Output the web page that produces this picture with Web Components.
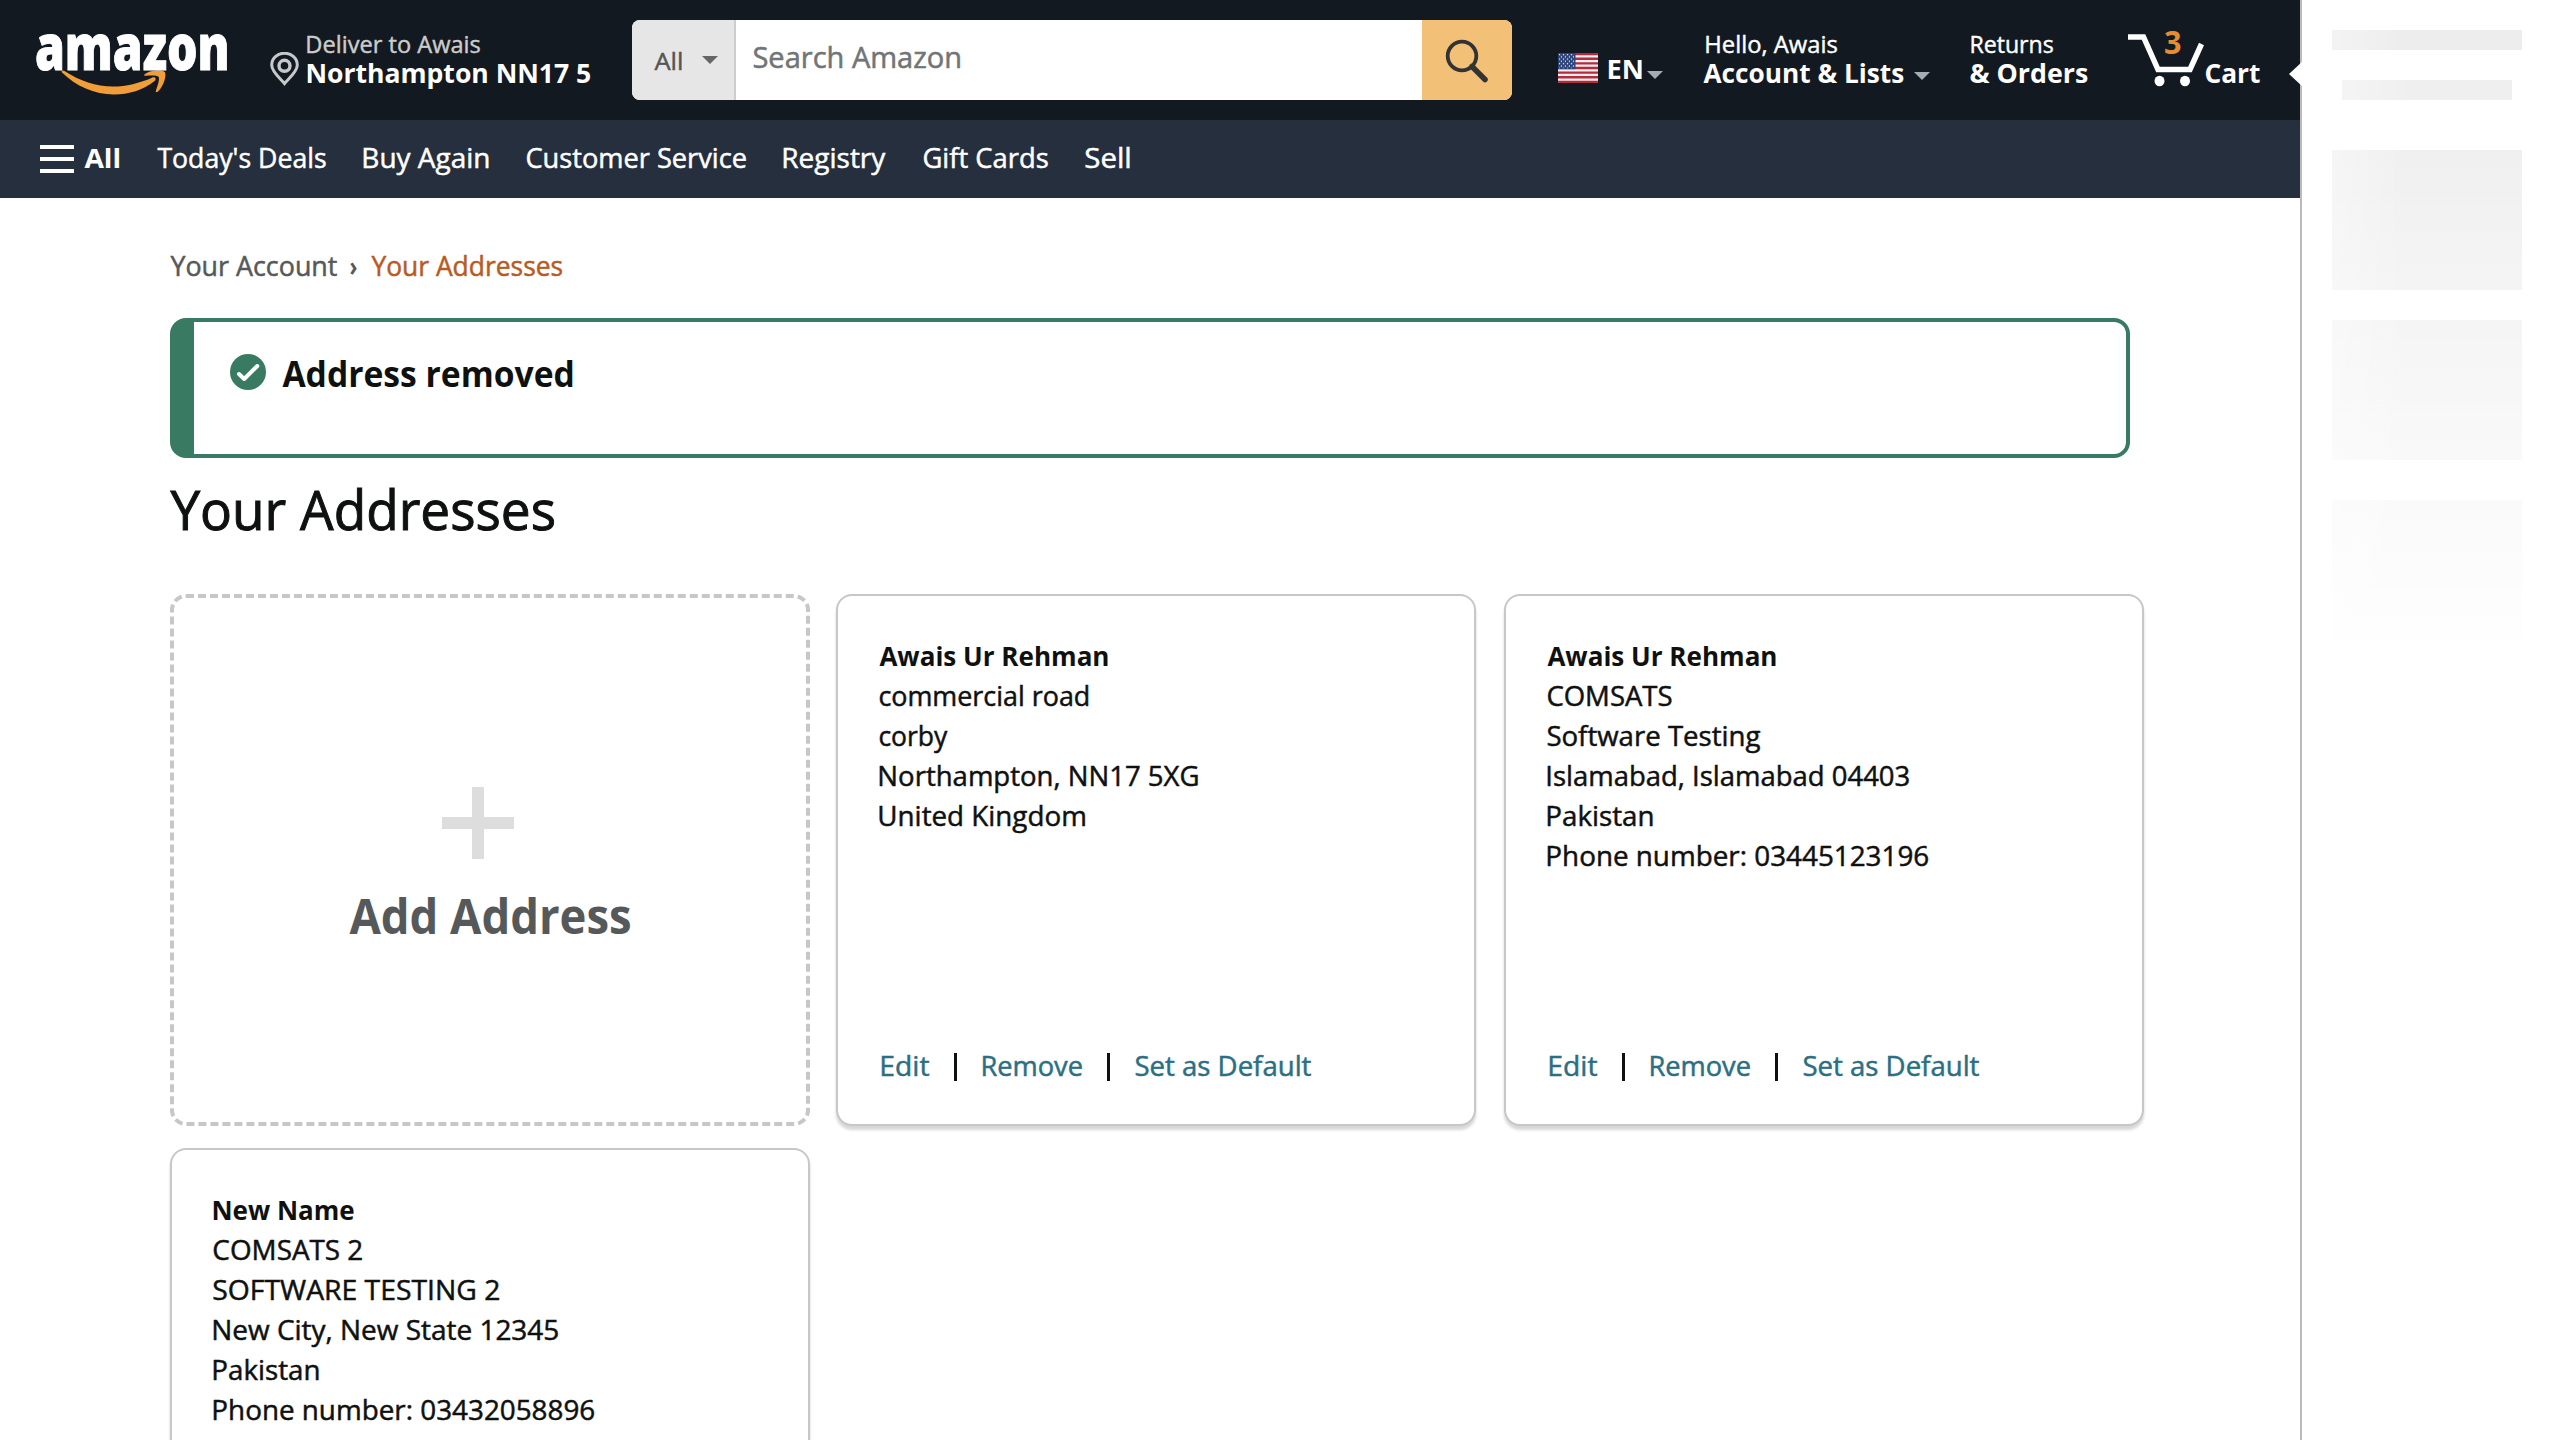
<!DOCTYPE html>
<html lang="en">
<head>
<meta charset="utf-8">
<title>Your Addresses</title>
<style>
html,body{margin:0;padding:0;background:#fff}
body{font-family:"Open Sans","Noto Sans",sans-serif;color:#0f1111;width:2560px;height:1440px;overflow:hidden}
</style>
</head>
<body>
<address-page></address-page>
<script>
const canvas = document.createElement('canvas').getContext('2d');
const define = (name, html) => customElements.define(name, class extends HTMLElement {
  constructor(){ super(); this.attachShadow({mode:'open'}).innerHTML = html; }
});

/* One line of text whose ink spans exactly `w` px; the box runs from cap height to baseline. */
customElements.define('t-text', class extends HTMLElement {
  constructor(){
    super();
    this.attachShadow({mode:'open'}).innerHTML =
      '<style>:host{display:block;flex:none;white-space:nowrap}:host(:not([weight])){-webkit-text-stroke:.018em currentColor}span{display:block;width:max-content;transform-origin:0 0}</style><span><slot></slot></span>';
  }
  connectedCallback(){
    const size = +(this.getAttribute('size') || 27), weight = this.getAttribute('weight') || 400, w = +this.getAttribute('w');
    const h = Math.round(size * .776);
    canvas.font = `${weight} ${size}px "Open Sans"`;
    const m = canvas.measureText(this.textContent);
    const s = (w - .6) / (m.actualBoundingBoxRight + m.actualBoundingBoxLeft);
    Object.assign(this.style, {width: w + 'px', height: h + 'px', lineHeight: h + 'px', fontSize: size + 'px', fontWeight: weight});
    this.shadowRoot.querySelector('span').style.transform = `translateX(${m.actualBoundingBoxLeft * s + .4}px) scaleX(${s})`;
  }
});

define('caret-down', `<style>:host{display:block;flex:none;width:0;border:8px solid transparent;border-top:8px solid var(--c,#a7acb2);border-bottom:0}</style>`);

define('brand-logo', `<style>
:host{display:block;width:192px;padding-top:21px;color:#fff}
t-text{-webkit-text-stroke:1px #fff}
svg{display:block;margin:-2px 0 0 25px}</style>
<t-text w="191" size="64" weight="800">amazon</t-text>
<svg width="106" height="27" viewBox="0 0 106 27"><path d="M1 3.500C0 2 1.500 .7 3.500 2C19 12 35 17.500 52 17.500C65 17.500 79 14 91 8.700C94 7.500 96 9.800 93.600 12C82 21 68 25.500 53 25.500C33 25.500 15 17 1 3.500Z" fill="#f19e38"/><path d="M84 5C89 1.200 102 .5 104 3.200C105.500 6 103 17 97 22.500C95.500 24 94.300 23 95 21.300C96.700 17 99 9.500 97.500 7.800C96 6 89 6.300 85 6.800C83 7 82.500 6 84 5Z" fill="#f19e38"/></svg>`);

define('deliver-to', `<style>
:host{display:flex;color:#fff}
svg{display:block;margin:52px 8px 0 0}
.c{padding-top:35px;display:flex;flex-direction:column;gap:9px}
.m{color:#ccc}</style>
<svg width="29" height="34" viewBox="0 0 29 34" fill="none" stroke="#c5c9cc"><path d="M14.500 31.500C11 27 1.700 20 1.700 13A12.800 11.800 0 0 1 27.300 13C27.300 20 18 27 14.500 31.500Z" stroke-width="3"/><circle cx="14.500" cy="13.800" r="5.500" stroke-width="3.400"/></svg>
<div class="c"><t-text class="m" w="173" size="23">Deliver to Awais</t-text><t-text w="284" weight="700">Northampton NN17 5</t-text></div>`);

define('search-bar', `<style>
:host{display:flex;width:880px;height:80px;margin-top:20px;border-radius:8px;overflow:hidden;background:#fff}
.s{box-sizing:border-box;width:104px;background:#e6e6e6;border-right:2px solid #cdcdcd;display:flex;padding:31px 0 0 22px;color:#555}
caret-down{--c:#666;margin:5px 0 0 19px}
.i{flex:1;padding:25px 0 0 16.500px;color:#717575}
.b{width:90px;background:#f3c077;display:flex}
svg{margin:19px 0 0 23px}</style>
<div class="s"><t-text w="28.500" size="24">All</t-text><caret-down></caret-down></div>
<div class="i"><t-text w="207" size="30">Search Amazon</t-text></div>
<div class="b"><svg width="46" height="46" viewBox="0 0 46 46" fill="none" stroke="#333"><circle cx="17" cy="17" r="14.300" stroke-width="3.800"/><path d="M27 27.500L40 40.500" stroke-width="5.500" stroke-linecap="round"/></svg></div>`);

define('us-flag', `<style>:host{display:block;width:40px;height:30px}svg{display:block;border-radius:1px}</style>
<svg width="40" height="30" viewBox="0 0 40 30"><defs><pattern id="d" width="4" height="4.600" patternUnits="userSpaceOnUse"><circle cx="1.500" cy="1.500" r=".75" fill="#dfe4f0"/><circle cx="3.500" cy="3.800" r=".75" fill="#dfe4f0"/></pattern></defs>
<rect width="40" height="30" fill="#f5eef0"/><path d="M0 1.150H40M0 5.770H40M0 10.390H40M0 15H40M0 19.610H40M0 24.230H40M0 28.850H40" stroke="#b22c3c" stroke-width="2.310"/><rect width="17.500" height="16.150" fill="#2a4178"/><rect x=".8" y=".8" width="16" height="14.500" fill="url(#d)"/></svg>`);

define('two-line', `<style>:host{display:flex;flex-direction:column;gap:9px;padding-top:35px;color:#fff}::slotted(*){display:flex}</style><slot></slot>`);

define('cart-link', `<style>:host{display:flex;color:#fff}svg{display:block;margin-top:26px}t-text{margin:62px 0 0 1px}</style>
<svg width="76" height="62" viewBox="0 0 76 62"><path d="M0 11H15.500L30 43.500H62L73.500 18" fill="none" stroke="#fff" stroke-width="5.500"/><ellipse cx="31.500" cy="55" rx="5" ry="5.200" fill="#fff"/><ellipse cx="57" cy="55" rx="5" ry="5.200" fill="#fff"/>
<text x="36" y="28.200" font-family="Open Sans, sans-serif" font-weight="700" font-size="32" textLength="17.500" lengthAdjust="spacingAndGlyphs" fill="#e58e31">3</text></svg>
<t-text w="55" weight="700">Cart</t-text>`);

define('top-bar', `<style>
:host{display:flex;height:120px;background:#131921;color:#fff;padding-left:36px}
.en{display:flex;margin-left:46px}
us-flag{margin-top:53px}
.r{display:flex}</style>
<brand-logo></brand-logo>
<deliver-to style="margin-left:42px"></deliver-to>
<search-bar style="margin-left:41px"></search-bar>
<div class="en"><us-flag></us-flag><t-text w="34" weight="700" style="margin:58px 5px 0 10px">EN</t-text><caret-down style="margin-top:71px"></caret-down></div>
<two-line style="margin-left:40px"><t-text w="131" size="23" style="margin-left:3px">Hello, Awais</t-text><div class="r"><t-text w="201" weight="700">Account &amp; Lists</t-text><caret-down style="margin:10px 0 0 10px"></caret-down></div></two-line>
<two-line style="margin-left:40px"><t-text w="82" size="23" style="margin-left:1px">Returns</t-text><t-text w="118" weight="700">&amp; Orders</t-text></two-line>
<cart-link style="margin-left:40px"></cart-link>`);

define('nav-bar', `<style>
:host{display:flex;height:78px;background:#262f3d;color:#fff;padding-left:40px}
.h{width:34px;height:20px;margin-top:25px;border:solid #fff;border-width:4px 0;display:flex;align-items:center}
.h i{display:block;width:34px;height:4px;background:#fff}
t-text{margin:27px 37px 0 0}</style>
<div class="h"><i></i></div>
<t-text w="36" weight="700" style="margin-left:9.500px">All</t-text>
<t-text w="169">Today's Deals</t-text><t-text w="126">Buy Again</t-text><t-text w="220">Customer Service</t-text><t-text w="103">Registry</t-text><t-text w="125">Gift Cards</t-text><t-text w="45">Sell</t-text>`);

define('bread-crumbs', `<style>:host{display:flex;padding-top:57px;color:#565959}.o{color:#b85b22}</style>
<t-text w="167">Your Account</t-text><t-text w="7" weight="700" style="margin:0 13.500px 0 13px">›</t-text><t-text class="o" w="191.500">Your Addresses</t-text>`);

define('success-alert', `<style>
:host{box-sizing:border-box;display:flex;width:1960px;height:140px;margin-top:42px;border:4px solid #397a62;border-left-width:24px;border-radius:16px;padding:32px 0 0 36px}
svg{display:block;margin-right:15.500px}
::slotted(*){margin-top:6px}</style>
<svg width="36" height="36" viewBox="0 0 36 36"><circle cx="18" cy="18" r="18" fill="#397a62"/><path d="M9 20L14.200 25L27.300 12" fill="none" stroke="#fff" stroke-width="4" stroke-linecap="round" stroke-linejoin="round"/></svg><slot></slot>`);

define('add-card', `<style>
:host{box-sizing:border-box;display:block;width:640px;height:532px;border:4px dashed #c7c7c7;border-radius:16px;color:#565959}
svg{display:block;margin:189px 0 0 268px}
t-text{margin:38px 0 0 174.500px}</style>
<svg width="72" height="72"><path d="M36 0V72M0 36H72" stroke="#ddd" stroke-width="12"/></svg>
<t-text w="282" size="48" weight="700">Add Address</t-text>`);

define('address-card', `<style>
:host{box-sizing:border-box;display:flex;flex-direction:column;justify-content:space-between;width:640px;height:532px;border:2px solid #c7c7c7;border-radius:16px;box-shadow:0 4px 3px rgba(0,0,0,.16);padding:49px 0 47px 40.500px;background:#fff}
.l{display:flex;flex-direction:column;gap:19px}
.a{display:flex;align-items:center;margin-left:2.500px;color:#2b6f84;height:24px}
i{display:block;width:3px;height:28px;background:#0f1111;margin:0 25px;transform:translateY(2px)}</style>
<div class="l"><slot></slot></div>
<div class="a"><t-text w="48">Edit</t-text><i></i><t-text w="100">Remove</t-text><i></i><t-text w="176">Set as Default</t-text></div>`);

define('cart-rail', `<style>
:host{position:relative;box-sizing:border-box;display:flex;flex-direction:column;width:260px;height:1440px;border-left:2px solid #bbb;padding:30px 38px 0 30px;background:#fff}
.p{position:absolute;left:-14px;top:61px}
div{position:relative;background:#eee}
div::before{content:"";position:absolute;inset:0 auto 0 0;width:62px;background:linear-gradient(90deg,rgba(255,255,255,.35),rgba(255,255,255,.06))}
.a{height:20px;background:#ededed}
.b{height:20px;margin:30px 10px 50px;background:#efefef}
.c{height:140px;background:linear-gradient(#f0f0f0,#f4f4f4)}
.d{height:140px;margin:30px 0 40px;background:linear-gradient(#f5f5f5,#f9f9f9)}
.e{height:140px;background:linear-gradient(#fafafa,#fefefe)}</style>
<svg class="p" width="15" height="26"><path d="M15 0L1 13L15 26Z" fill="#fff"/></svg>
<div class="a"></div><div class="b"></div><div class="c"></div><div class="d"></div><div class="e"></div>`);

define('address-page', `<style>
:host{display:flex;width:2560px;height:1440px;overflow:hidden}
.m{width:2300px;flex:none}
main{padding-left:170px}
.g{display:grid;grid-template-columns:639px 641px 640px;column-gap:27px;row-gap:22px;margin-top:64px}</style>
<div class="m"><top-bar></top-bar><nav-bar></nav-bar>
<main><bread-crumbs></bread-crumbs>
<success-alert><t-text w="291" size="35" weight="700">Address removed</t-text></success-alert>
<t-text w="384" size="55" style="margin-top:29px">Your Addresses</t-text>
<div class="g"><add-card></add-card>
<address-card><t-text w="229" weight="700">Awais Ur Rehman</t-text><t-text w="210">commercial road</t-text><t-text w="69">corby</t-text><t-text w="319">Northampton, NN17 5XG</t-text><t-text w="206">United Kingdom</t-text></address-card>
<address-card><t-text w="229" weight="700">Awais Ur Rehman</t-text><t-text w="125">COMSATS</t-text><t-text w="214">Software Testing</t-text><t-text w="362">Islamabad, Islamabad 04403</t-text><t-text w="106">Pakistan</t-text><t-text w="382">Phone number: 03445123196</t-text></address-card>
<address-card><t-text w="141" weight="700">New Name</t-text><t-text w="149">COMSATS 2</t-text><t-text w="286">SOFTWARE TESTING 2</t-text><t-text w="345">New City, New State 12345</t-text><t-text w="106">Pakistan</t-text><t-text w="382">Phone number: 03432058896</t-text></address-card>
</div></main></div>
<cart-rail></cart-rail>`);
</script>
</body>
</html>
